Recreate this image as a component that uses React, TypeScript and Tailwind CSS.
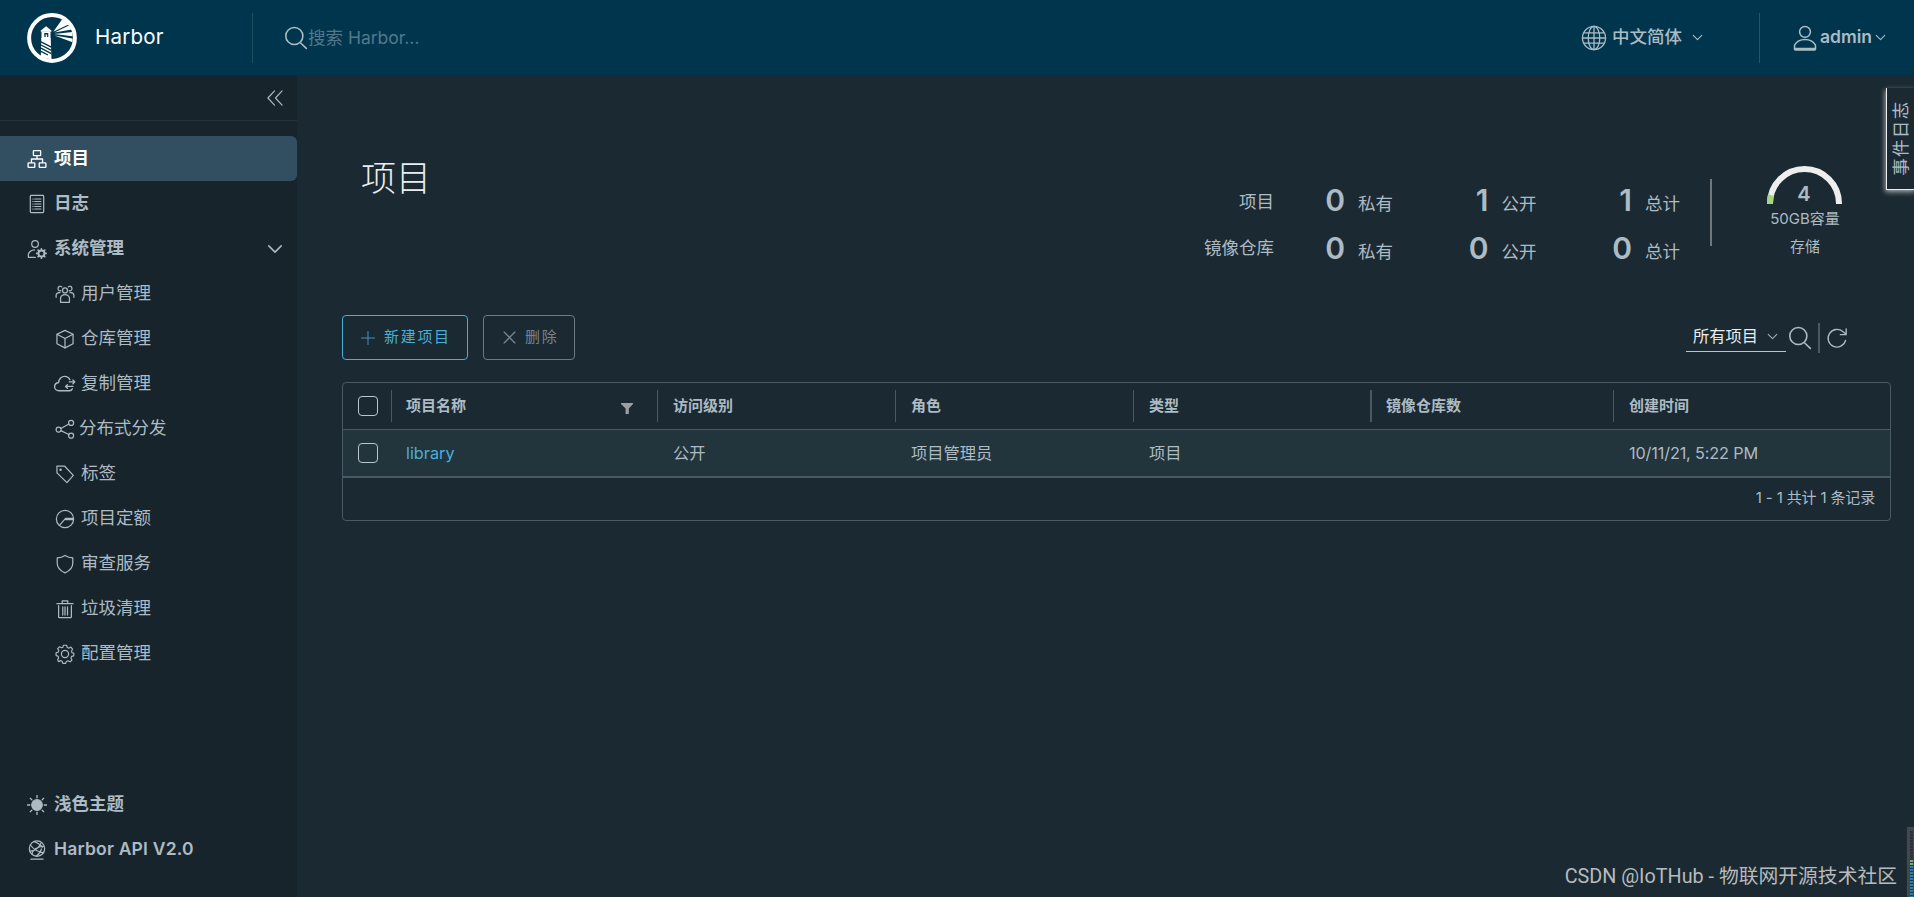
import type { ReactNode } from 'react';

type IconProps = { className?: string; children?: ReactNode; sw?: number };

function Svg({ className = '', children, sw = 2.2 }: IconProps) {
  return (
    <svg
      viewBox="0 0 36 36"
      className={'shrink-0 ' + className}
      fill="none"
      stroke="currentColor"
      strokeWidth={sw}
      strokeLinejoin="round"
      strokeLinecap="round"
    >
      {children}
    </svg>
  );
}

function Logo() {
  return (
    <svg viewBox="0 0 50 50" className="size-[50px] shrink-0">
      <circle cx="25" cy="25" r="22.9" fill="none" stroke="#fff" strokeWidth="4" />
      <path d="M13.800 18.800v-1.300l5.300-4.300 5.300 4.300v1.300z" fill="#fff" />
      <path d="M14.500 18.500h9v7.200h-9z" fill="#fff" />
      <path d="M17.300 20h4v4h-1.200v-2.600h-1.500V24h-1.300z" fill="#00364d" />
      <path d="M14.300 25h9.400l.8 21.500L13.800 44z" fill="#fff" />
      <path d="M14 28.800l10.400 5.400M14 32l10.400 5.400M14 35.200l10.400 5.400M14 38.400l7 3.600" stroke="#00364d" strokeWidth="1.3" />
      <path d="M26.300 18.800L34.500 7.200l2.500-2 6 5-1.500 1.200z" fill="#fff" />
      <path d="M27.500 19.500L42 12.600l2.800 4z" fill="#fff" />
      <path d="M27 21.100l18.500-2v4.200z" fill="#fff" />
      <path d="M27.500 22.600l18 2.800v3.800z" fill="#fff" />
    </svg>
  );
}

const Chevron = ({ className = '', sw = 3.6 }: IconProps) => (
  <Svg className={className} sw={sw}>
    <path d="M4 11l14 14 14-14" />
  </Svg>
);

const Magnifier = ({ className = '' }: IconProps) => (
  <Svg className={className} sw={2.4}>
    <circle cx="15.5" cy="15" r="12.8" />
    <path d="M25 25.5l8.500 8" />
  </Svg>
);

const icons: Record<string, ReactNode> = {
  project: (
    <Svg className="size-5" sw={2.4}>
      <rect x="11.500" y="3" width="13" height="9" rx="1" />
      <rect x="2" y="25" width="12" height="8" rx="1" />
      <rect x="22" y="25" width="12" height="8" rx="1" />
      <path d="M18 12v6M8 24v-6h20v6" />
    </Svg>
  ),
  log: (
    <Svg className="size-5">
      <rect x="6" y="2.500" width="24" height="31" rx="1.500" />
      <path d="M14 9h11M14 13.500h11M14 18h11M14 22.500h11M14 27h11M10.500 9h.5M10.500 13.500h.5M10.500 18h.5M10.500 22.500h.5M10.500 27h.5" />
    </Svg>
  ),
  admin: (
    <Svg className="size-5">
      <circle cx="14.500" cy="9" r="6" />
      <path d="M15 33H2.500v-6c2-4.500 6-7 11-7.300" />
      <circle cx="26" cy="26" r="5.400" strokeWidth="3.400" />
      <path d="M26 17.500v2M26 32.500v2M17.500 26h2M32.500 26h2M20 20l1.500 1.500M30.500 30.500L32 32M32 20l-1.500 1.500M21.500 30.500L20 32" strokeWidth="3" />
    </Svg>
  ),
  users: (
    <Svg className="size-5">
      <circle cx="18" cy="11.500" r="4.500" />
      <path d="M10 33v-8c1-4 4-6 8-6s7 2 8 6v8z" />
      <path d="M10.500 12c-3 1-5.500-1-5-4.500.500-3 4-4.500 6.500-2.500M25.500 12c3 1 5.500-1 5-4.500-.500-3-4-4.500-6.500-2.500M2 24v-4c.500-3 3-5 7-4.500M34 24v-4c-.500-3-3-5-7-4.500" />
    </Svg>
  ),
  box: (
    <Svg className="size-5">
      <path d="M18 2.500l14.500 7v17L18 34 3.500 26.500v-17z" />
      <path d="M3.500 9.500L18 17l14.500-7.500M18 17v17" />
    </Svg>
  ),
  cloud: (
    <Svg className="size-[22px]">
      <path d="M30 26c-1 2-2.500 3-4.500 3H8c-4 0-7-3-7-6.500S4 16 7.500 15.500C8 9.500 12.500 5.500 17.500 5.500c4 0 7 2.200 8.500 5.500" />
      <path d="M25 14.500h9M31 11.500l3 3-3 3M31 22H19M22 19l-3 3 3 3" />
    </Svg>
  ),
  share: (
    <Svg className="size-5">
      <circle cx="6.500" cy="19" r="4.500" />
      <circle cx="29" cy="7" r="4.500" />
      <circle cx="29" cy="30" r="4.500" />
      <path d="M10.500 17L25 9M10.500 21L25 28" />
    </Svg>
  ),
  tag: (
    <Svg className="size-5">
      <path d="M3.500 4h14L33 20.500 21.500 33.500 3.500 16z" />
      <circle cx="10" cy="10.500" r="1.200" />
    </Svg>
  ),
  quota: (
    <Svg className="size-5">
      <circle cx="18" cy="18" r="15.500" />
      <path d="M33 17H19L8 29.500M19 19h14" />
    </Svg>
  ),
  shield: (
    <Svg className="size-5">
      <path d="M18 2.500c4.500 3 9 4.200 14 4.500v9.500c0 8-5.500 13.500-14 17.500C9.500 30 4 24.500 4 16.500V7c5-.300 9.500-1.500 14-4.500z" />
    </Svg>
  ),
  trash: (
    <Svg className="size-5">
      <path d="M3.500 8.500h29M13 8V3.500h10V8M6.500 12v20.500c0 .600.400 1 1 1h21c.600 0 1-.400 1-1V12M14 14v15M18 14v15M22.500 14v15" />
    </Svg>
  ),
  gear: (
    <Svg className="size-5">
      <path
        d="M15 2.500h6l1.200 4.300 3 1.300L29 6l3.200 3.800-2 4 1 3 3.300.800v5l-4 1-1.400 3 2 3.900-3.600 3.500-4-2-3 1.300-1.300 3.700h-5.400l-1.300-4-3-1.300-3.800 2L4 30.200l2-4-1.200-3-3.800-1v-5.400l4-1.200 1.200-3L4 9l3.500-3.500 4 2 2.500-1.200z"
        transform="translate(1 -.2) scale(.95)"
      />
      <circle cx="18" cy="18" r="6.500" />
    </Svg>
  ),
  sun: (
    <Svg className="size-5">
      <circle cx="18" cy="18" r="9.500" fill="currentColor" />
      <path d="M18 1v4M18 31v4M1 18h4M31 18h4M6 6l2.800 2.800M27.200 27.200L30 30M30 6l-2.800 2.800M6 30l2.800-2.800" strokeWidth="2.400" />
    </Svg>
  ),
  api: (
    <Svg className="size-5">
      <circle cx="18" cy="15.500" r="13.800" />
      <path d="M7 34.500h22M6 9c5 7 12 12 24 14M13 3c4 1 10 5 15 10M5 20c8 0 16-5 20-14M9 25c1-6 9-14 21-14M17 29c4-3 8-8 9-13" />
    </Svg>
  ),
};

const subItems = [
  { icon: 'users', label: '用户管理' },
  { icon: 'box', label: '仓库管理' },
  { icon: 'cloud', label: '复制管理' },
  { icon: 'share', label: '分布式分发' },
  { icon: 'tag', label: '标签' },
  { icon: 'quota', label: '项目定额' },
  { icon: 'shield', label: '审查服务' },
  { icon: 'trash', label: '垃圾清理' },
  { icon: 'gear', label: '配置管理' },
];

function NavRow({ icon, label, active, children }: { icon: string; label: string; active?: boolean; children?: ReactNode }) {
  return (
    <div
      className={
        'flex h-[45px] items-center pl-[27px] pr-[14px] text-[17.5px] font-bold ' +
        (active ? 'rounded-r-[6px] bg-[#324f62] text-white' : 'text-[#adbbc4]')
      }
    >
      {icons[icon]}
      <span className={'ml-[7px] ' + (icon === 'api' ? 'font-semibold tracking-[0.2px]' : '')}>{label}</span>
      {children}
    </div>
  );
}

function Header() {
  return (
    <header className="flex h-[75px] shrink-0 items-center bg-[#00364d] text-[17.5px] text-[#adbbc4]">
      <div className="flex h-[50px] w-[253px] shrink-0 items-center border-r border-[#1f4e62] pl-[27px]">
        <Logo />
        <span className="ml-[18px] text-[20.500px] tracking-[0.200px] text-white">Harbor</span>
      </div>
      <div className="flex flex-1 items-center pl-[31px]">
        <Magnifier className="size-6" />
        <span className="pt-px text-[#54788a]">搜索 Harbor...</span>
      </div>
      <div className="flex h-[50px] w-[179px] items-center border-r border-[#27536a]">
        <Svg className="size-[26px]" sw={1.8}>
          <circle cx="18" cy="18" r="16" />
          <ellipse cx="18" cy="18" rx="8" ry="16" />
          <path d="M18 2v32M2 18h32M4.500 11h27M4.500 25h27" />
        </Svg>
        <span className="ml-[5px] font-medium">中文简体</span>
        <Chevron className="ml-[10px] size-[11px]" />
      </div>
      <div className="flex w-[154px] items-center pl-[32px]">
        <Svg className="size-[26px]" sw={2.1}>
          <circle cx="18" cy="9.500" r="7.500" />
          <path d="M3.500 33.500V28c3-5.500 8-8 14.500-8s11.500 2.500 14.500 8v5.500c0 .500-.500 1-1 1H4.500c-.500 0-1-.500-1-1zM4 32.500h28" />
        </Svg>
        <span className="ml-[2px] w-[54px] font-semibold">admin</span>
        <Chevron className="ml-px size-[11px]" />
      </div>
    </header>
  );
}

function Sidebar() {
  return (
    <aside className="flex w-[297px] shrink-0 flex-col bg-[#17242b] text-[#adbbc4]">
      <div className="flex h-[46px] items-center justify-end border-b border-[#22313a] pr-[14px]">
        <Svg className="size-4" sw={2.600}>
          <path d="M17 2L2 18l15 16M34 2L19 18l15 16" />
        </Svg>
      </div>
      <nav className="mt-[15px] flex-1">
        <NavRow icon="project" label="项目" active />
        <NavRow icon="log" label="日志" />
        <NavRow icon="admin" label="系统管理">
          <Chevron className="ml-auto size-4" sw={3.500} />
        </NavRow>
        {subItems.map((s) => (
          <div key={s.label} className="flex h-[45px] items-center pl-[54px] text-[17.5px]">
            <span className="flex w-[22px] items-center justify-center">{icons[s.icon]}</span>
            <span className={s.icon === 'share' ? 'ml-[3px]' : 'ml-[5px]'}>{s.label}</span>
          </div>
        ))}
      </nav>
      <div className="pb-[25px]">
        <NavRow icon="sun" label="浅色主题" />
        <NavRow icon="api" label="Harbor API V2.0" />
      </div>
    </aside>
  );
}

const stats = [
  { title: '项目', values: [0, 1, 1] },
  { title: '镜像仓库', values: [0, 0, 0] },
];
const statLabels = ['私有', '公开', '总计'];

function Statistics() {
  return (
    <div className="flex">
      <div className="pt-[24px]">
        {stats.map((row, r) => (
          <div key={row.title} className="flex h-[48px] items-center text-[17.5px]">
            <span className={'w-[80px] text-right ' + (r === 0 ? 'pb-[2px]' : 'pb-[5px]')}>{row.title}</span>
            {row.values.map((v, i) => (
              <span key={statLabels[i]} className={'flex items-center ' + (i === 0 ? 'w-[119px]' : 'w-[143.500px]')}>
                <span className="flex-1 pb-[7px] text-right text-[30px] leading-[36px] font-semibold">{v}</span>
                <span className="ml-[13px] pt-[3px]">{statLabels[i]}</span>
              </span>
            ))}
          </div>
        ))}
      </div>
      <div className="mt-[24px] ml-[30px] h-[67px] w-0.5 bg-[#6d777c]" />
      <div className="ml-[54px] flex w-[76px] flex-col items-center pt-[10px]">
        <div className="grid h-[38px] w-[75px] place-items-center">
          <svg viewBox="0 0 75 38" className="col-start-1 row-start-1 h-[38px] w-[75px]" fill="none" strokeWidth="6">
            <path d="M3 38v-.5a34.500 34.500 0 0 1 69 0v.5" stroke="#eee" />
            <path d="M3 38v-.5a34.500 34.500 0 0 1 1-8.500" stroke="#a6d57f" />
          </svg>
          <span className="col-start-1 row-start-1 pt-[19px] text-[20px] leading-5 font-semibold">4</span>
        </div>
        <span className="mt-[5px] ml-[2px] text-[15px] leading-[22px] whitespace-nowrap">50GB容量</span>
        <span className="mt-[6px] ml-[2px] text-[15px] leading-[22px]">存储</span>
      </div>
    </div>
  );
}

const grid = 'grid grid-cols-[48px_266px_238px_238px_237px_243px_1fr]';
const headings = ['项目名称', '访问级别', '角色', '类型', '镜像仓库数', '创建时间'];
const cells = ['library', '公开', '项目管理员', '项目', '', '10/11/21, 5:22 PM'];

const Checkbox = () => <span className="ml-[15px] size-5 rounded-[4px] border border-[#b9c6ce]" />;

function DataGrid() {
  return (
    <div className="mt-[22px] rounded-[4px] border border-[#495a65]">
      <div className={grid + ' h-[46px] items-center'}>
        <Checkbox />
        {headings.map((h, i) => (
          <div
            key={h}
            className={
              'flex h-8 items-center border-[#495a65] text-[15px] font-bold ' +
              (i === 4 ? 'border-l-2 pl-[14px]' : i === 0 ? 'border-l pl-[14px]' : 'border-l pl-[15px]')
            }
          >
            {h}
            {i === 0 && (
              <svg viewBox="0 0 12 11" className="mt-[5px] mr-[24px] ml-auto h-[11px] w-3" fill="#a09f9f">
                <path d="M0 0h12v1L7.800 5.500V11H4.600V5.500L0 1z" />
              </svg>
            )}
          </div>
        ))}
      </div>
      <div className={grid + ' h-[47px] items-center border-t border-[#495a65] bg-[#22343c]'}>
        <Checkbox />
        {cells.map((c, i) => (
          <div
            key={i}
            className={
              i === 0
                ? 'pl-[15px] text-[16.250px] text-[#49afd9]'
                : i === 5
                  ? 'pl-4 text-[16.250px] tracking-[-0.150px]'
                  : 'pl-4 text-[16.250px]'
            }
          >
            {c}
          </div>
        ))}
      </div>
      <div className="flex h-[44px] items-center justify-end border-t-2 border-[#495a65] pr-[15px] pb-[2px] text-[15px] tracking-[-0.150px]">
        1 - 1 共计 1 条记录
      </div>
    </div>
  );
}

function Toolbar() {
  return (
    <div className="mt-[39px] flex h-[45px] items-center">
      <button className="flex h-[45px] w-[126px] items-center rounded-[4px] border border-[#49afd9] pl-[18px] text-[15px] tracking-[1.700px] text-[#49afd9]">
        <Svg className="size-[14px] opacity-80" sw={2.600}>
          <path d="M18 1v34M1 18h34" />
        </Svg>
        <span className="ml-[9px]">新建项目</span>
      </button>
      <button className="ml-[15px] flex h-[45px] w-[92px] items-center rounded-[4px] border border-[#6f7a80] pl-[19px] text-[15px] tracking-[1.700px] text-[#78848a]">
        <Svg className="size-[13px]" sw={3.600}>
          <path d="M3 3l30 30M33 3L3 33" />
        </Svg>
        <span className="ml-[9px]">删除</span>
      </button>
      <div className="mr-[43px] ml-auto flex items-center">
        <div className="mb-px flex h-[30px] w-[100px] items-center border-b border-[#b9c6ce] pl-[7px] text-[16.250px] text-[#eaedf0]">
          <span>所有项目</span>
          <Chevron className="ml-[9px] size-[11px] text-[#a0adb5]" />
        </div>
        <Magnifier className="ml-[2px] size-6" />
        <div className="ml-[6px] h-[30px] w-0.5 bg-[#495a65]" />
        <Svg className="ml-[6px] size-[22px]" sw={2.200}>
          <path d="M32 22A14.500 14.500 0 1 1 27.500 7.500L33 12M33 3v9.500h-9.500" />
        </Svg>
      </div>
    </div>
  );
}

export default function App() {
  return (
    <div className="relative flex h-[897px] w-[1914px] flex-col overflow-hidden bg-[#1b2a32] font-['Inter','Noto_Sans_CJK_SC',sans-serif] text-[#adbbc4]">
      <Header />
      <div className="flex flex-1">
        <Sidebar />
        <main className="flex-1 pt-[80px] pr-[23px] pl-[45px]">
          <div className="flex h-[121px] justify-between">
            <h1 className="pl-[19px] text-[35px] leading-[46px] font-light text-[#eaedf0]">项目</h1>
            <div className="mr-[49px]">
              <Statistics />
            </div>
          </div>
          <Toolbar />
          <DataGrid />
        </main>
      </div>

      <div className="absolute top-[88px] right-[-2px] flex h-[102px] w-[30px] items-center justify-center border-b border-l border-[#eaedf0] bg-[#1b2a32] shadow-[-1px_2px_5px_#fff9]">
        <span className="-rotate-90 text-[17.500px] tracking-[1.300px] whitespace-nowrap">事件日志</span>
      </div>

      <div className="absolute right-[17px] bottom-[5px] font-['Roboto','Noto_Sans_CJK_SC',sans-serif] text-[19.800px] leading-[30px] text-[#b7bbbd]">
        CSDN @IoTHub - 物联网开源技术社区
      </div>
      <div className="absolute right-0 bottom-0 flex h-[71px] w-2 flex-col border-t border-l border-[#222b30] bg-[#3e4a50] pt-[4px] pl-[3px]">
        <div className="h-[29px] w-[3px] bg-[repeating-linear-gradient(#2b3038_0_2px,#3a3a44_2px_3px)]" />
        <div className="h-[6px] w-[3px] bg-[repeating-linear-gradient(#7fae7a_0_2px,#2b3038_2px_3px)]" />
        <div className="w-[3px] flex-1 bg-[repeating-linear-gradient(#2783ad_0_2px,#22303a_2px_3px)]" />
      </div>
    </div>
  );
}
